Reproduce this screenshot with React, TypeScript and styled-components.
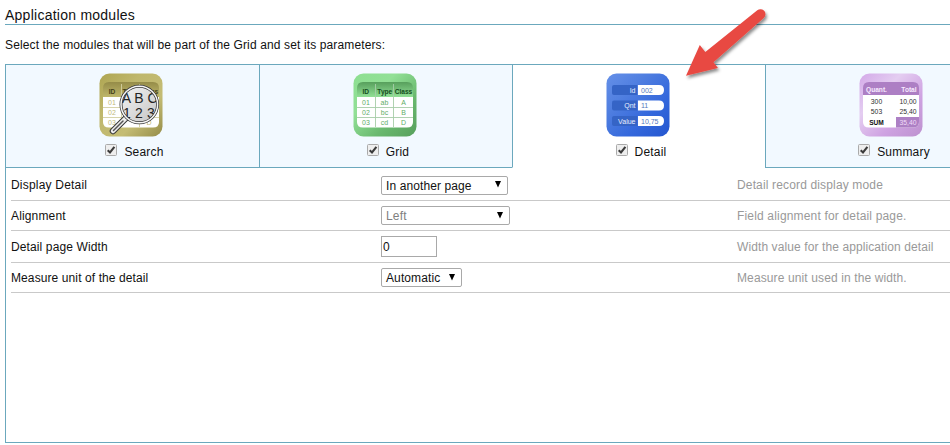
import React from "react";
import styled, { createGlobalStyle } from "styled-components";

const LINE = "#6ba8bd";

const GlobalStyle = createGlobalStyle`
  * { box-sizing: border-box; }
  body {
    margin: 0;
    background: #fff;
    overflow: hidden;
    color: #111;
    font: 12px/14px "Liberation Sans", Arial, sans-serif;
  }
`;

const Page = styled.main`
  position: relative;
  width: 950px;
  height: 445px;
  padding-left: 5px;
  overflow: hidden;
`;

const Title = styled.h1`
  margin: 0;
  height: 25px;
  padding-top: 7px;
  border-bottom: 1px solid ${LINE};
  font-size: 14px;
  line-height: 16px;
  font-weight: 400;
  letter-spacing: 0.25px;
  white-space: nowrap;
`;

const Intro = styled.p<{ $spacing: number }>`
  margin: 0;
  height: 39px;
  padding-top: 13px;
  letter-spacing: ${(p) => p.$spacing}px;
  white-space: nowrap;
`;

const Panel = styled.section`
  width: 1014px;
  height: 379px;
  border: 1px solid ${LINE};
  border-left: 0;
`;

const Tabs = styled.div`
  display: grid;
  grid-template-columns: 254px 253px 253px 253px;
  height: 103px;
`;

const Tab = styled.div<{ $active?: boolean }>`
  display: flex;
  flex-direction: column;
  align-items: center;
  padding: 8px 3px 0 0;
  border-left: 1px solid ${LINE};
  border-bottom: 1px solid ${(p) => (p.$active ? "#fff" : LINE)};
  background: ${(p) => (p.$active ? "#fff" : "#f2f9ff")};
`;

const TabLabel = styled.label<{ $spacing: number }>`
  display: flex;
  align-items: center;
  gap: 7px;
  height: 16px;
  margin: 7px 0 0 7px;
  letter-spacing: ${(p) => p.$spacing}px;
`;

const CheckMark = styled.svg`
  width: 12px;
  height: 12px;
  margin-top: -4px;
`;

const Form = styled.div`
  height: 274px;
  padding-left: 6px;
  border-left: 1px solid ${LINE};
`;

const Row = styled.div<{ $height: number; $top?: number }>`
  display: grid;
  grid-template-columns: 370px 356px 1fr;
  align-items: center;
  height: ${(p) => p.$height}px;
  margin-left: -1px;
  padding-top: ${(p) => p.$top ?? 0}px;
  border-bottom: 1px solid #c9c9c9;
`;

const Caption = styled.span<{ $spacing: number; $hint?: boolean }>`
  color: ${(p) => (p.$hint ? "#999" : "#111")};
  letter-spacing: ${(p) => p.$spacing}px;
  white-space: nowrap;
`;

const Select = styled.div<{ $width: number; $disabled?: boolean; $spacing: number }>`
  display: flex;
  align-items: center;
  justify-content: space-between;
  width: ${(p) => p.$width}px;
  height: 19px;
  padding: 1px 6px 0 4px;
  border: 1px solid #a9a9a9;
  border-radius: 2px;
  color: ${(p) => (p.$disabled ? "#808080" : "#111")};
  letter-spacing: ${(p) => p.$spacing}px;
  white-space: nowrap;
`;

const Caret = styled.svg`
  width: 6px;
  height: 7px;
  margin-top: -2px;
`;

const NumberInput = styled.input`
  width: 56px;
  height: 21px;
  padding: 1px 1px 0;
  border: 1px solid #a9a9a9;
  background: #fff;
  color: #111;
  font: inherit;
`;

const Arrow = styled.svg`
  position: absolute;
  left: 676px;
  top: 0;
  width: 100px;
  height: 90px;
`;

type Cell = [number, number, string];

const IconText = ({ cells, fill, bold, size = 7 }: { cells: Cell[]; fill: string; bold?: boolean; size?: number }) => (
  <g fill={fill} fontSize={size} fontWeight={bold ? 700 : 400} textAnchor="middle" fontFamily="Liberation Sans, Arial, sans-serif">
    {cells.map(([x, y, t]) => (
      <text key={`${x}-${y}`} x={x} y={y}>{t}</text>
    ))}
  </g>
);

const Tile = ({ id, stops, children }: { id: string; stops: string[]; children: React.ReactNode }) => (
  <svg width="64" height="64" viewBox="0 0 64 64">
    <defs>
      <linearGradient id={id} x1="0" y1="0" x2="1" y2="1">
        {stops.map((c, i) => <stop key={i} offset={i / (stops.length - 1)} stopColor={c} />)}
      </linearGradient>
      <linearGradient id={`${id}-head`} x1="0" y1="0" x2="0" y2="1">
        <stop offset="0" stopColor={stops[stops.length - 1]} />
        <stop offset="1" stopColor={stops[1]} />
      </linearGradient>
    </defs>
    <rect x="0.5" y="0.5" width="63" height="63" rx="10" fill={`url(#${id})`} />
    {children}
  </svg>
);

const TableBase = ({ head, line }: { head: string; line: string }) => (
  <>
    <path d="M4 24V15Q4 9 10 9H54Q60 9 60 15V24Z" fill={head} />
    <path d="M4 24H60V49Q60 54.500 54 54.500H10Q4 54.500 4 49Z" fill="#fff" />
    <path d="M4 34.500H60M4 44.500H60M22.500 11V54M40.500 11V54" stroke={line} strokeWidth="0.9" />
  </>
);

const SearchIcon = () => (
  <Tile id="search" stops={["#aea552", "#bfb76c", "#c4bc74", "#958c48"]}>
    <TableBase head="url(#search-head)" line="#d3cfa2" />
    <IconText bold size={6.6} fill="#433f18" cells={[[13, 20.5, "ID"], [31, 20.5, "Type"], [50.5, 20.5, "Class"]]} />
    <IconText fill="#c0b97c" cells={[[13, 32, "01"], [13, 42, "02"], [13, 52, "03"], [50, 52, "D"]]} />
    <defs>
      <clipPath id="lens"><circle cx="40.300" cy="31.500" r="17.500" /></clipPath>
      <linearGradient id="glass" x1="0" x2="1" y1="0" y2="1">
        <stop offset="0" stopColor="#f4f4f4" /><stop offset="1" stopColor="#c4c4c4" />
      </linearGradient>
    </defs>
    <path d="M27 45 14 58" stroke="#383838" strokeWidth="6.500" strokeLinecap="round" />
    <path d="M27 45 14 58" stroke="#eee" strokeWidth="4.500" strokeLinecap="round" />
    <path d="M24 48 14.500 57.500" stroke="#555" strokeWidth="1.500" strokeLinecap="round" />
    <circle cx="40.300" cy="31.500" r="18" fill="url(#glass)" />
    <g clipPath="url(#lens)">
      <IconText fill="#242424" size={14} cells={[[27.5, 29.5, "A"], [40, 29.5, "B"], [53.5, 29.5, "C"], [28, 45, "1"], [40, 45, "2"], [52, 45, "3"]]} />
    </g>
    <circle cx="40.300" cy="31.500" r="18.300" fill="none" stroke="#383838" strokeWidth="3" />
    <circle cx="40.300" cy="31.500" r="18.300" fill="none" stroke="#f6f6f6" strokeWidth="1.500" />
  </Tile>
);

const GridIcon = () => (
  <Tile id="grid" stops={["#8ddf91", "#92e096", "#6ab96f", "#579f5c"]}>
    <TableBase head="url(#grid-head)" line="#a7cda8" />
    <IconText bold size={6.6} fill="#164e20" cells={[[12.7, 20.5, "ID"], [31.8, 20.5, "Type"], [50.5, 20.5, "Class"]]} />
    <IconText fill="#62ad68" cells={[
      [13, 32, "01"], [31.5, 32, "ab"], [50.5, 32, "A"],
      [13, 42, "02"], [31.5, 42, "bc"], [50.5, 42, "B"],
      [13, 52, "03"], [31.5, 52, "cd"], [50.5, 52, "D"],
    ]} />
  </Tile>
);

const DetailIcon = () => (
  <Tile id="detail" stops={["#6590e8", "#4f7ee0", "#3468dc", "#2456cf"]}>
    {[["Id", "002"], ["Qnt", "11"], ["Value", "10,75"]].map(([name, value], i) => (
      <g key={name} transform={`translate(0 ${12 + i * 15.5})`} fontSize="7" fontFamily="Liberation Sans, Arial, sans-serif">
        <path d="M8 0H31V10H8Q6 10 6 8V2Q6 0 8 0Z" fill="#3564c6" />
        <path d="M32 0H53Q58 0 58 5T53 10H32Z" fill="#fff" />
        <text x="29.500" y="7.500" textAnchor="end" fill="#e7efff">{name}</text>
        <text x="35" y="7.500" fill="#5378bd">{value}</text>
      </g>
    ))}
  </Tile>
);

const SummaryIcon = () => (
  <Tile id="summary" stops={["#d3a9e8", "#e4cdf1", "#cfa3e2", "#bd91cf"]}>
    <path d="M4 22V15Q4 9 10 9H54Q60 9 60 15V22Z" fill="#ad7fc4" />
    <path d="M4 22H60V49Q60 54.500 54 54.500H10Q4 54.500 4 49Z" fill="#fff" />
    <path d="M37 44H60V49Q60 54.500 54 54.500H37Z" fill="#ad80c4" />
    <IconText bold fill="#f8eaff" size={6.6} cells={[[17.5, 18.5, "Quant."], [50, 18.5, "Total"]]} />
    <IconText fill="#303030" size={6.8} cells={[[17.5, 31, "300"], [49, 31, "10,00"], [17.5, 41, "503"], [49, 41, "25,40"]]} />
    <IconText bold fill="#111" size={6.6} cells={[[17.5, 51.5, "SUM"]]} />
    <IconText fill="#f1dcf9" size={6.8} cells={[[49, 51.5, "35,40"]]} />
  </Tile>
);

const Check = () => (
  <CheckMark viewBox="0 0 12 12">
    <rect x="0.500" y="0.500" width="11" height="11" rx="1" fill="#eee" stroke="#aaa" />
    <path d="M2.700 6.200 5 8.400 9.400 2.900" fill="none" stroke="#3b3b3b" strokeWidth="2.100" />
  </CheckMark>
);

const modules = [
  { name: "Search", Icon: SearchIcon, spacing: 0.2 },
  { name: "Grid", Icon: GridIcon, spacing: 0.2 },
  { name: "Detail", Icon: DetailIcon, spacing: 0.2, active: true },
  { name: "Summary", Icon: SummaryIcon, spacing: 0.2 },
];

const Dropdown = ({ text, width, spacing, disabled }: { text: string; width: number; spacing: number; disabled?: boolean }) => (
  <Select $width={width} $spacing={spacing} $disabled={disabled}>
    <span>{text}</span>
    <Caret viewBox="0 0 6 7"><path d="M0 0H6L3 6.500Z" fill="#000" /></Caret>
  </Select>
);

const rows = [
  { label: "Display Detail", hint: "Detail record display mode", height: 33, top: 2, ls: 0.2, hs: 0.15, field: <Dropdown text="In another page" width={127} spacing={0.1} /> },
  { label: "Alignment", hint: "Field alignment for detail page.", height: 30, ls: 0.15, hs: 0.17, field: <Dropdown text="Left" width={129} spacing={0.2} disabled /> },
  { label: "Detail page Width", hint: "Width value for the application detail", height: 32, ls: 0.12, hs: 0.1, field: <NumberInput defaultValue="0" aria-label="Detail page Width" /> },
  { label: "Measure unit of the detail", hint: "Measure unit used in the width.", height: 30, ls: 0.1, hs: 0.12, field: <Dropdown text="Automatic" width={81} spacing={0.1} /> },
];

export default function App() {
  return (
    <Page>
      <GlobalStyle />
      <Title>Application modules</Title>
      <Intro $spacing={0.13}>Select the modules that will be part of the Grid and set its parameters:</Intro>
      <Panel>
        <Tabs>
          {modules.map(({ name, Icon, spacing, active }) => (
            <Tab key={name} $active={active}>
              <Icon />
              <TabLabel $spacing={spacing}><Check />{name}</TabLabel>
            </Tab>
          ))}
        </Tabs>
        <Form>
          {rows.map((r) => (
            <Row key={r.label} $height={r.height} $top={r.top}>
              <Caption $spacing={r.ls}>{r.label}</Caption>
              {r.field}
              <Caption $spacing={r.hs} $hint>{r.hint}</Caption>
            </Row>
          ))}
        </Form>
      </Panel>
      <Arrow viewBox="676 0 100 90">
        <defs>
          <filter id="shadow" x="-20%" y="-20%" width="140%" height="150%">
            <feDropShadow dx="1.5" dy="2.5" stdDeviation="1.8" floodColor="#000" floodOpacity="0.45" />
          </filter>
        </defs>
        <path filter="url(#shadow)" d="M757.300 10.200A5 5 0 0 1 763.500 18.200L713.500 62.300 718 68 686 75.700 699.800 45 705.300 52Z" fill="#e84a43" />
      </Arrow>
    </Page>
  );
}
